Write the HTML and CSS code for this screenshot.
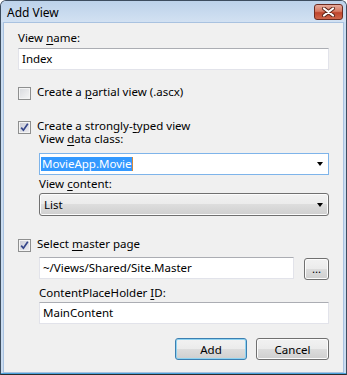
FILE: index.html
```html
<!DOCTYPE html>
<html lang="en">
<head>
  <meta charset="UTF-8">
  <title>Add View</title>
  <meta name="viewport" content="width=device-width, initial-scale=1.0">
  <link rel="stylesheet" href="styles.css">
</head>
<body>

  <div class="window">
    <!-- Title bar -->
    <div class="titlebar">
      <span class="title">Add View</span>
      <span class="close">
        <svg width="15" height="10" viewBox="0 0 15 10">
          <path d="M3 1.5 L12 8.5 M12 1.5 L3 8.5" stroke="#5b2418" stroke-width="4" stroke-linecap="round"/>
          <path d="M3 1.5 L12 8.5 M12 1.5 L3 8.5" stroke="#ffffff" stroke-width="2.2" stroke-linecap="round"/>
        </svg>
      </span>
    </div>

    <!-- Dialog body -->
    <div class="client">
      <div class="label lbl-name">View <u>n</u>ame:</div>
      <div class="textbox tb-name">Index</div>

      <div class="check row-partial">
        <span class="box"></span>
        <span>Create a <u>p</u>artial view (.ascx)</span>
      </div>

      <div class="check row-typed">
        <span class="box">
          <svg width="11" height="11" viewBox="0 0 11 11">
            <path d="M2.2 5.6 L4.4 8.2 L8.8 1.8" stroke="#34458a" stroke-width="1.7" fill="none"/>
          </svg>
        </span>
        <span>Create a strongly-<u>t</u>yped view</span>
      </div>

      <div class="group">
        <div class="label lbl-class">View <u>d</u>ata class:</div>
        <div class="combo focused">
          <span class="selected">MovieApp.Movie</span>
          <span class="arrow"></span>
        </div>
        <div class="label lbl-content">View <u>c</u>ontent:</div>
        <div class="combo dropdown">
          <span>List</span>
          <span class="arrow"></span>
        </div>
      </div>

      <div class="check row-master">
        <span class="box">
          <svg width="11" height="11" viewBox="0 0 11 11">
            <path d="M2.2 5.6 L4.4 8.2 L8.8 1.8" stroke="#34458a" stroke-width="1.7" fill="none"/>
          </svg>
        </span>
        <span>Select <u>m</u>aster page</span>
      </div>

      <div class="group">
        <div class="path-row">
          <div class="textbox tb-path">~/Views/Shared/Site.Master</div>
          <button class="btn browse">...</button>
        </div>
        <div class="label lbl-cph">ContentPlaceHolder <u>I</u>D:</div>
        <div class="textbox tb-cph">MainContent</div>
      </div>

      <div class="actions">
        <button class="btn default">Add</button>
        <button class="btn cancel">Cancel</button>
      </div>
    </div>
  </div>

</body>
</html>
```

FILE: styles.css
```css
body {
  margin: 0;
  font-family: "Noto Sans", "Open Sans", sans-serif;
  font-size: 11.5px;
  line-height: 13px;
  color: #000000;
}

u {
  text-decoration-thickness: 1px;
  text-underline-offset: 2px;
}

/* Window frame */
.window {
  box-sizing: border-box;
  width: 347px;
  height: 375px;
  display: flex;
  flex-direction: column;
  border: 1px solid #3d4d5f;
  border-bottom-color: #2b2b2b;
  border-radius: 6px 6px 0 0;
  padding: 0 2px 1px 2px;
  background-color: #cadcf0;
  box-shadow: inset 0 -1px 0 #4aa3dc;
}

.titlebar {
  height: 21px;
  display: flex;
  align-items: flex-start;
  justify-content: space-between;
  margin: 0 -2px;
  padding: 0 3px 0 6px;
  border-radius: 5px 5px 0 0;
  background: linear-gradient(#bcd2ea, #d2e1f2);
}

.title {
  margin-top: 5px;
  font-size: 12px;
}

.close {
  box-sizing: border-box;
  width: 29px;
  height: 16px;
  margin-top: 3px;
  display: flex;
  align-items: center;
  justify-content: center;
  border: 1px solid #6d2b20;
  border-radius: 3px;
  background: linear-gradient(#e6ab9c 0%, #d77a63 45%, #bf452d 55%, #cf664b 100%);
}

.client {
  flex: 1;
  border: 1px solid #a9c2e0;
  background-color: #f0f0f0;
  padding: 8px 14px 0 14px;
}

.label {
  height: 13px;
}

.lbl-class { margin-top: 0; }
.lbl-content { margin-top: 2px; }
.lbl-cph { margin-top: 6px; }

/* Text inputs */
.textbox {
  box-sizing: border-box;
  height: 22px;
  padding: 3px 3px;
  background-color: #ffffff;
  border: 1px solid #e2e3ea;
  border-top-color: #abadb3;
}

.tb-name { margin-top: 4px; }
.tb-cph { margin-top: 3px; }

/* Checkboxes */
.check {
  display: flex;
  align-items: flex-start;
  height: 13px;
}

.row-partial { margin-top: 15px; }
.row-typed { margin-top: 21px; }
.row-master { margin-top: 21px; }

.box {
  box-sizing: border-box;
  width: 13px;
  height: 13px;
  margin: 2px 6px 0 0;
  border: 1px solid #8e8f8f;
  background: linear-gradient(135deg, #d7d9dd, #f6f6f6);
  box-shadow: inset 0 0 0 1px #f4f4f4;
  display: flex;
  align-items: center;
  justify-content: center;
}

.row-typed .box,
.row-master .box {
  background: linear-gradient(135deg, #c9cbd6, #eeeef2);
}

.group {
  padding-left: 21px;
}

/* Combo boxes */
.combo {
  box-sizing: border-box;
  height: 22px;
  display: flex;
  align-items: center;
  justify-content: space-between;
  padding: 0 5px 0 1px;
}

.combo.focused {
  margin-top: 8px;
  background-color: #ffffff;
  border: 1px solid #7eb4ea;
}

.selected {
  background-color: #3399ff;
  color: #ffffff;
  padding: 0 1px;
  line-height: 14px;
  height: 14px;
  border-right: 1px solid #d48a3c;
}

.combo.dropdown {
  height: 23px;
  margin-top: 3px;
  padding-left: 4px;
  border: 1px solid #707070;
  border-radius: 3px;
  background: linear-gradient(#f2f2f2 0%, #ebebeb 50%, #dddddd 50%, #cfcfcf 100%);
  box-shadow: inset 0 0 0 1px #fcfcfc;
}

.arrow {
  width: 0;
  height: 0;
  border-top: 4px solid #000000;
  border-left: 3.5px solid transparent;
  border-right: 3.5px solid transparent;
}

/* Master page row */
.path-row {
  display: flex;
  align-items: flex-start;
  gap: 10px;
  margin-top: 7px;
}

.tb-path {
  flex: 1;
}

/* Buttons */
.btn {
  box-sizing: border-box;
  height: 22px;
  padding: 0;
  font-family: inherit;
  font-size: 11.5px;
  color: #000000;
  border: 1px solid #707070;
  border-radius: 3px;
  background: linear-gradient(#f2f2f2 0%, #ebebeb 50%, #dddddd 50%, #cfcfcf 100%);
  box-shadow: inset 0 0 0 1px #fcfcfc;
}

.browse {
  width: 25px;
  margin-top: 1px;
  line-height: 14px;
}

.actions {
  display: flex;
  justify-content: flex-end;
  gap: 9px;
  margin-top: 14px;
}

.default {
  width: 72px;
  border-color: #3c7fb1;
  box-shadow: inset 0 0 0 1px #8fd3f1;
}

.cancel {
  width: 73px;
}
```
